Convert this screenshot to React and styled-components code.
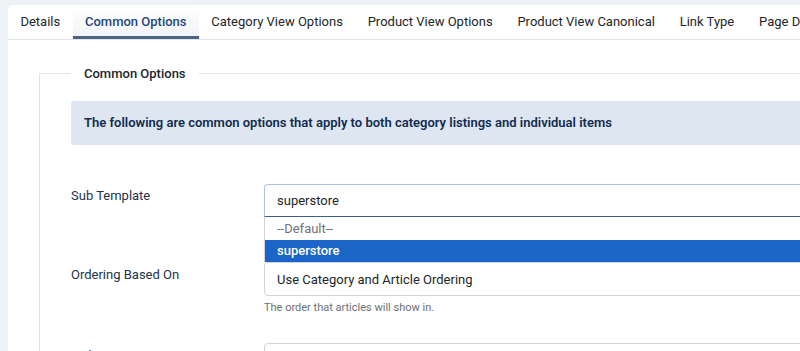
import React from 'react';
import styled, { createGlobalStyle, css } from 'styled-components';

const GlobalStyle = createGlobalStyle`
  html, body {
    margin: 0;
    padding: 0;
    background: #eef1f6;
    overflow: hidden;
  }
  body {
    font-family: Roboto, "Liberation Sans", sans-serif;
    color: #22262a;
  }
`;

const Page = styled.div`
  padding: 5px 0 0 8px;
  height: 351px;
  box-sizing: border-box;
`;

const Panel = styled.div`
  width: 1100px;
  height: 100%;
  background: #fff;
  border-top-left-radius: 5px;
`;

const TabBar = styled.div`
  display: flex;
  border-bottom: 1px solid #e2e5ea;
`;

const Tab = styled.div`
  padding: 0 12.4px;
  height: 34px;
  line-height: 33px;
  font-size: 13px;
  color: #22262a;
  box-sizing: border-box;
  white-space: nowrap;
  ${p => p.active && css`
    color: #1f4878;
    font-weight: 500;
    background: linear-gradient(#ffffff, #f2f4f8);
    border-bottom: 3px solid #4d6584;
  `}
`;

const Body = styled.div`
  padding: 26px 0 0 31px;
`;

const Fieldset = styled.fieldset`
  margin: 0;
  padding: 20px 0 0 31px;
  border: 1px solid #dfe3e9;
  border-right: 0;
  border-bottom: 0;
  min-width: 0;
`;

const Legend = styled.legend`
  padding: 0 13px;
  font-size: 13px;
  font-weight: 500;
  color: #22262a;
`;

const Alert = styled.div`
  background: #dde6f1;
  color: #132c50;
  font-size: 13px;
  font-weight: 600;
  padding: 0 13px;
  height: 44px;
  line-height: 44px;
  border-radius: 3px 0 0 3px;
`;

const Row = styled.div`
  display: grid;
  grid-template-columns: 193px 1fr;
  margin-top: ${p => p.gap}px;
`;

const Label = styled.div`
  font-size: 13px;
  color: #22334a;
  padding-top: ${p => p.pad || 6}px;
`;

const Control = styled.div`
  position: relative;
`;

const Select = styled.div`
  height: 34px;
  box-sizing: border-box;
  padding: 0 12px;
  display: flex;
  align-items: center;
  font-size: 13px;
  color: #22262a;
  border: 1px solid #cfd4da;
  border-radius: 4px;
  ${p => p.focused && css`
    height: 33px;
    border-color: #a9c4e4;
    border-bottom-color: #3e5f88;
    border-radius: 4px 0 0 0;
  `}
`;

const Dropdown = styled.div`
  position: absolute;
  left: 0;
  right: 0;
  top: 33px;
  background: #fff;
  border-left: 1px solid #cfd4da;
  z-index: 2;
`;

const Option = styled.div`
  height: ${p => p.h}px;
  line-height: ${p => p.h}px;
  padding: 0 12px;
  font-size: 13px;
  color: #6d737a;
  ${p => p.selected && css`
    background: #1b65c9;
    color: #fff;
    font-weight: 500;
  `}
`;

const Help = styled.div`
  font-size: 11px;
  color: #6b7077;
  margin-top: 5px;
`;

const tabs = [
  'Details',
  'Common Options',
  'Category View Options',
  'Product View Options',
  'Product View Canonical',
  'Link Type',
  'Page Display',
];

export default function App() {
  return (
    <>
      <GlobalStyle />
      <Page>
        <Panel>
          <TabBar>
            {tabs.map(t => (
              <Tab key={t} active={t === 'Common Options'}>{t}</Tab>
            ))}
          </TabBar>
          <Body>
            <Fieldset>
              <Legend>Common Options</Legend>
              <Alert>
                The following are common options that apply to both category listings and individual items
              </Alert>
              <Row gap={39}>
                <Label pad={4}>Sub Template</Label>
                <Control>
                  <Select focused>superstore</Select>
                  <Dropdown>
                    <Option h={23}>--Default--</Option>
                    <Option h={22} selected>superstore</Option>
                  </Dropdown>
                </Control>
              </Row>
              <Row gap={45}>
                <Label pad={5}>Ordering Based On</Label>
                <Control>
                  <Select>Use Category and Article Ordering</Select>
                  <Help>The order that articles will show in.</Help>
                </Control>
              </Row>
              <Row gap={29}>
                <Label pad={5}>Ordering Direction</Label>
                <Control>
                  <Select>Descending</Select>
                </Control>
              </Row>
            </Fieldset>
          </Body>
        </Panel>
      </Page>
    </>
  );
}
